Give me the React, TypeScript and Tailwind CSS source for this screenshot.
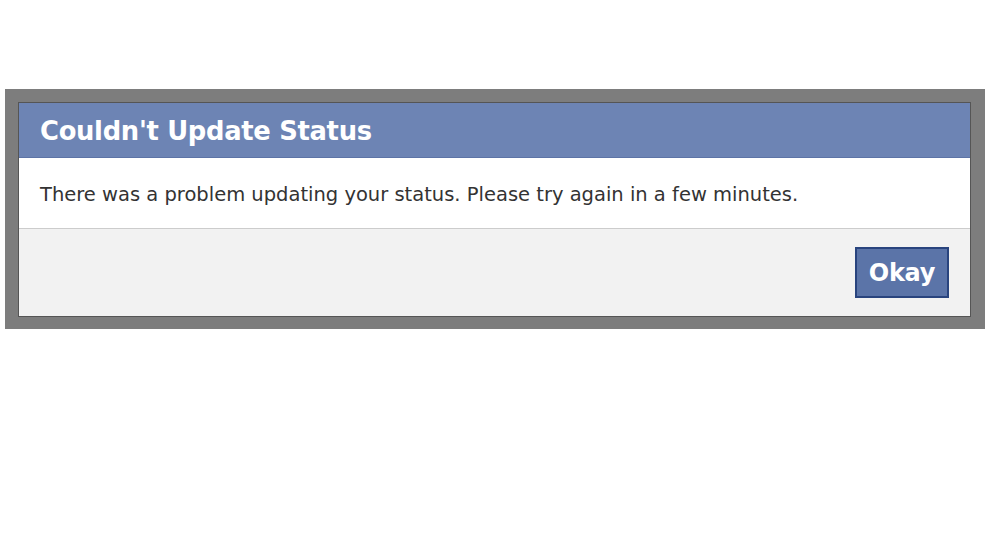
import React from "react";

export default function App() {
  return (
    <div className="w-[992px] h-[559px] bg-white pt-[89px] pl-[5px]" style={{ fontFamily: '"DejaVu Sans", Verdana, sans-serif' }}>
      <div className="w-[980px] h-[240px] bg-[#7d7d7d] pt-[13px] pl-[13px] pr-[14px] pb-[12px]">
        <div className="h-full flex flex-col border border-[#555555] bg-white">
          <div className="h-[55px] bg-[#6d84b4] border-b border-[#5d74a6] flex items-center pl-[21px] pt-[4px]">
            <span className="text-white font-bold text-[25.8px] tracking-[-0.3px] leading-none">Couldn't Update Status</span>
          </div>
          <div className="h-[71px] bg-white border-b border-[#cccccc] flex items-center pl-[21px] pt-[3px]">
            <span className="text-[#333333] text-[19.5px] leading-none">There was a problem updating your status. Please try again in a few minutes.</span>
          </div>
          <div className="flex-1 bg-[#f2f2f2] flex items-center justify-end pr-[21px]">
            <button className="w-[94px] h-[51px] bg-[#5b74a8] border-2 border-[#29447e] text-white font-bold text-[24px] tracking-[-0.3px] flex items-center justify-center">Okay</button>
          </div>
        </div>
      </div>
    </div>
  );
}
